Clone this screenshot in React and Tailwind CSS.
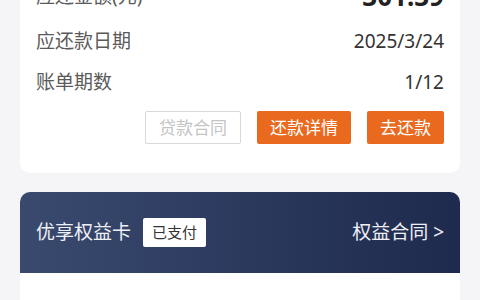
import React from 'react';

const font = { fontFamily: '"Noto Sans", "Noto Sans CJK SC", sans-serif' };

const Row = ({ label, value, bold }) => (
  <div className={bold ? 'flex h-[49px] items-center justify-between' : 'flex h-[41px] items-center justify-between'}>
    <span className="text-[19px] text-[#5a5a5a]">{label}</span>
    <span className={bold ? 'text-[26px] font-bold text-[#222]' : 'text-[19px] text-[#333]'}>{value}</span>
  </div>
);

export default function App() {
  return (
    <div className="h-[300px] w-[480px] overflow-hidden bg-[#f5f5f7] px-5" style={font}>
      {/* bill card, scrolled past its top */}
      <div className="-mt-[28px] rounded-b-[10px] bg-white px-4 pb-[29px]">
        <Row label="应还金额(元)" value="301.39" bold />
        <Row label="应还款日期" value="2025/3/24" />
        <Row label="账单期数" value="1/12" />
        <div className="mt-[8px] flex justify-end gap-4">
          <button className="h-[33px] rounded-[2px] border border-[#d9d9d9] px-[13px] text-[17px] text-[#c4c4c4]">贷款合同</button>
          <button className="h-[33px] rounded-[2px] bg-[#e96a1f] px-[13px] text-[17px] text-white">还款详情</button>
          <button className="h-[33px] rounded-[2px] bg-[#e96a1f] px-[13px] text-[17px] text-white">去还款</button>
        </div>
      </div>

      {/* benefit card */}
      <div className="mt-[19px] overflow-hidden rounded-t-[10px]">
        <div className="flex h-[81px] items-center justify-between bg-gradient-to-r from-[#3a4a6f] to-[#1e2a4e] px-4">
          <div className="flex items-center">
            <span className="text-[19px] text-[#eef0f5]">优享权益卡</span>
            <span className="ml-3 flex h-[29px] items-center rounded-[2px] bg-white px-[9px] text-[15px] text-[#333]">已支付</span>
          </div>
          <span className="text-[19px] text-[#eef0f5]">权益合同 &gt;</span>
        </div>
        <div className="h-[60px] bg-white" />
      </div>
    </div>
  );
}
